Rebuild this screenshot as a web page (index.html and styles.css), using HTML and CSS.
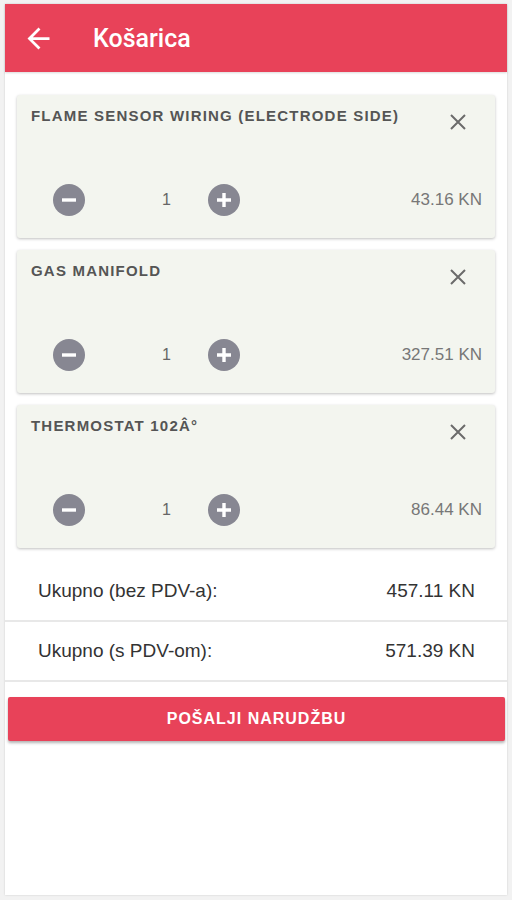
FILE: index.html
```html
<!DOCTYPE html>
<html>
<head>
    <title>Košarica</title>
    <meta charset="utf-8">
    <meta name="viewport" content="width=device-width, initial-scale=1">
    <link rel="stylesheet" href="styles.css">
</head>
<body>
    <div class="screen">
        <!-- Toolbar -->
        <div class="toolbar">
            <svg class="back" width="33" height="33" viewBox="0 0 24 24">
                <path d="M20 11H7.83l5.59-5.59L12 4l-8 8 8 8 1.41-1.41L7.83 13H20v-2z" fill="#fff"/>
            </svg>
            <h1>Košarica</h1>
        </div>

        <!-- Stavke u košarici -->
        <div class="cart-list">
            <div class="cart-item">
                <div class="item-top">
                    <div class="item-name">Flame sensor wiring (electrode side)</div>
                    <svg class="remove" width="24" height="24" viewBox="0 0 24 24">
                        <path d="M5 5L19 19M19 5L5 19" stroke="#6b6b6b" stroke-width="2" fill="none"/>
                    </svg>
                </div>
                <div class="item-bottom">
                    <div class="qty">
                        <span class="qty-btn"><svg width="32" height="32" viewBox="0 0 32 32"><path d="M9 16H23" stroke="#fff" stroke-width="3.4"/></svg></span>
                        <span class="qty-num">1</span>
                        <span class="qty-btn"><svg width="32" height="32" viewBox="0 0 32 32"><path d="M9 16H23M16 9V23" stroke="#fff" stroke-width="3.4"/></svg></span>
                    </div>
                    <div class="price">43.16 KN</div>
                </div>
            </div>

            <div class="cart-item">
                <div class="item-top">
                    <div class="item-name">Gas manifold</div>
                    <svg class="remove" width="24" height="24" viewBox="0 0 24 24">
                        <path d="M5 5L19 19M19 5L5 19" stroke="#6b6b6b" stroke-width="2" fill="none"/>
                    </svg>
                </div>
                <div class="item-bottom">
                    <div class="qty">
                        <span class="qty-btn"><svg width="32" height="32" viewBox="0 0 32 32"><path d="M9 16H23" stroke="#fff" stroke-width="3.4"/></svg></span>
                        <span class="qty-num">1</span>
                        <span class="qty-btn"><svg width="32" height="32" viewBox="0 0 32 32"><path d="M9 16H23M16 9V23" stroke="#fff" stroke-width="3.4"/></svg></span>
                    </div>
                    <div class="price">327.51 KN</div>
                </div>
            </div>

            <div class="cart-item">
                <div class="item-top">
                    <div class="item-name">Thermostat 102Â°</div>
                    <svg class="remove" width="24" height="24" viewBox="0 0 24 24">
                        <path d="M5 5L19 19M19 5L5 19" stroke="#6b6b6b" stroke-width="2" fill="none"/>
                    </svg>
                </div>
                <div class="item-bottom">
                    <div class="qty">
                        <span class="qty-btn"><svg width="32" height="32" viewBox="0 0 32 32"><path d="M9 16H23" stroke="#fff" stroke-width="3.4"/></svg></span>
                        <span class="qty-num">1</span>
                        <span class="qty-btn"><svg width="32" height="32" viewBox="0 0 32 32"><path d="M9 16H23M16 9V23" stroke="#fff" stroke-width="3.4"/></svg></span>
                    </div>
                    <div class="price">86.44 KN</div>
                </div>
            </div>
        </div>

        <!-- Ukupno -->
        <div class="total-row">
            <span>Ukupno (bez PDV-a):</span>
            <span>457.11 KN</span>
        </div>
        <div class="total-row">
            <span>Ukupno (s PDV-om):</span>
            <span>571.39 KN</span>
        </div>

        <button class="order">Pošalji narudžbu</button>
    </div>
</body>
</html>
```

FILE: styles.css
```css
body {
    margin: 0;
    background-color: #f2f2f2;
    font-family: "Liberation Sans", Arial, sans-serif;
}

.screen {
    width: 502px;
    height: 891px;
    margin: 4px 5px;
    background-color: #fff;
    box-shadow: 0 0 2px rgba(0,0,0,0.15);
}

.toolbar {
    height: 68px;
    background-color: #e84259;
    display: flex;
    align-items: center;
    padding-left: 17px;
    box-shadow: 0 1px 2px rgba(0,0,0,0.15);
}

.toolbar .back {
    margin-right: 38px;
}

.toolbar h1 {
    margin: 0;
    color: #fff;
    font-family: Roboto, "Liberation Sans", sans-serif;
    font-weight: 500;
    font-size: 25px;
}

.cart-list {
    padding: 23px 12px 14px;
    display: flex;
    flex-direction: column;
    gap: 12px;
}

.cart-item {
    height: 143px;
    box-sizing: border-box;
    background-color: #f3f5ef;
    border-radius: 3px;
    box-shadow: 0 1px 3px rgba(0,0,0,0.25);
    padding: 12px 13px 22px 14px;
    display: flex;
    flex-direction: column;
    justify-content: space-between;
}

.item-top {
    display: flex;
    justify-content: space-between;
    align-items: flex-start;
}

.item-name {
    font-size: 15px;
    font-weight: bold;
    color: #555;
    text-transform: uppercase;
    letter-spacing: 1.2px;
    line-height: 18px;
}

.remove {
    margin: 3px 12px 0 0;
}

.item-bottom {
    display: flex;
    justify-content: space-between;
    align-items: center;
}

.qty {
    display: flex;
    align-items: center;
    padding-left: 22px;
}

.qty-btn {
    width: 32px;
    height: 32px;
    border-radius: 50%;
    background-color: #878792;
    display: flex;
}

.qty-num {
    width: 123px;
    box-sizing: border-box;
    padding-left: 77px;
    font-size: 16px;
    color: #666;
}

.price {
    font-size: 17px;
    color: #777;
}

.total-row {
    height: 58px;
    display: flex;
    justify-content: space-between;
    align-items: center;
    padding: 0 32px 0 33px;
    border-bottom: 2px solid #e8e8e8;
    font-size: 19px;
    color: #333;
}

.order {
    display: block;
    width: 497px;
    height: 44px;
    margin: 15px 0 0 3px;
    border: none;
    border-radius: 2px;
    background-color: #e84259;
    color: #fff;
    font-family: "Liberation Sans", Arial, sans-serif;
    font-size: 16px;
    font-weight: bold;
    text-transform: uppercase;
    letter-spacing: 1px;
    box-shadow: 0 2px 3px rgba(0,0,0,0.3);
}
```
